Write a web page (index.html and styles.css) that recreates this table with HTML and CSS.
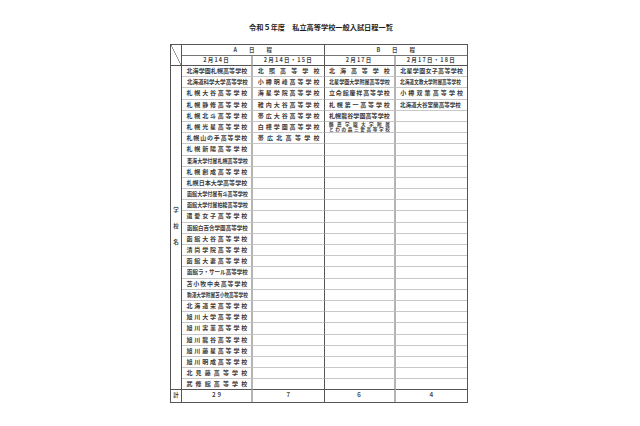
FILE: index.html
```html
<!DOCTYPE html>
<html lang="ja">
<head>
<meta charset="utf-8">
<title>令和５年度 私立高等学校一般入試日程一覧</title>
<link rel="stylesheet" href="styles.css">
</head>
<body>
<div class="page">
  <h1 class="title">令和５年度　私立高等学校一般入試日程一覧</h1>
  <div class="grid">
    <div class="c corner"></div>
    <div class="c h1 span2 dark">A日程</div>
    <div class="c h1 span2 last">B日程</div>
    <div class="c h2 g">2月14日</div>
    <div class="c h2 dark">2月14日・15日</div>
    <div class="c h2 g">2月17日</div>
    <div class="c h2 last">2月17日・18日</div>
    <div class="c label"><span>学</span><span>校</span><span>名</span></div>

    <div class="c n g">北海学園札幌高等学校</div><div class="c n dark">北照高等学校</div><div class="c n g">北海高等学校</div><div class="c n last">北星学園女子高等学校</div>
    <div class="c n g"><span class="sq x11">北海道科学大学高等学校</span></div><div class="c n dark">小樽明峰高等学校</div><div class="c n g"><span class="sq x12">北星学園大学附属高等学校</span></div><div class="c n last"><span class="sq x13">北海道文教大学附属高等学校</span></div>
    <div class="c n g">札幌大谷高等学校</div><div class="c n dark">海星学院高等学校</div><div class="c n g">立命館慶祥高等学校</div><div class="c n last">小樽双葉高等学校</div>
    <div class="c n g">札幌静修高等学校</div><div class="c n dark">稚内大谷高等学校</div><div class="c n g">札幌第一高等学校</div><div class="c n last"><span class="sq x11">北海道大谷室蘭高等学校</span></div>
    <div class="c n g">札幌北斗高等学校</div><div class="c n dark">帯広大谷高等学校</div><div class="c n g">札幌龍谷学園高等学校</div><div class="c n last"></div>
    <div class="c n g">札幌光星高等学校</div><div class="c n dark">白樺学園高等学校</div><div class="c n g two"><span class="ln">酪農学園大学附属</span><span class="ln">とわの森三愛高等学校</span></div><div class="c n last"></div>
    <div class="c n g">札幌山の手高等学校</div><div class="c n dark">帯広北高等学校</div><div class="c n g"></div><div class="c n last"></div>
    <div class="c n g">札幌新陽高等学校</div><div class="c n dark"></div><div class="c n g"></div><div class="c n last"></div>
    <div class="c n g"><span class="sq x12">東海大学付属札幌高等学校</span></div><div class="c n dark"></div><div class="c n g"></div><div class="c n last"></div>
    <div class="c n g">札幌創成高等学校</div><div class="c n dark"></div><div class="c n g"></div><div class="c n last"></div>
    <div class="c n g">札幌日本大学高等学校</div><div class="c n dark"></div><div class="c n g"></div><div class="c n last"></div>
    <div class="c n g"><span class="sq x12">函館大学付属有斗高等学校</span></div><div class="c n dark"></div><div class="c n g"></div><div class="c n last"></div>
    <div class="c n g"><span class="sq x12">函館大学付属柏稜高等学校</span></div><div class="c n dark"></div><div class="c n g"></div><div class="c n last"></div>
    <div class="c n g">遺愛女子高等学校</div><div class="c n dark"></div><div class="c n g"></div><div class="c n last"></div>
    <div class="c n g"><span class="sq x11">函館白百合学園高等学校</span></div><div class="c n dark"></div><div class="c n g"></div><div class="c n last"></div>
    <div class="c n g">函館大谷高等学校</div><div class="c n dark"></div><div class="c n g"></div><div class="c n last"></div>
    <div class="c n g">清尚学院高等学校</div><div class="c n dark"></div><div class="c n g"></div><div class="c n last"></div>
    <div class="c n g">函館大妻高等学校</div><div class="c n dark"></div><div class="c n g"></div><div class="c n last"></div>
    <div class="c n g"><span class="sq x11">函館ラ・サール高等学校</span></div><div class="c n dark"></div><div class="c n g"></div><div class="c n last"></div>
    <div class="c n g">苫小牧中央高等学校</div><div class="c n dark"></div><div class="c n g"></div><div class="c n last"></div>
    <div class="c n g"><span class="sq x13">駒澤大学附属苫小牧高等学校</span></div><div class="c n dark"></div><div class="c n g"></div><div class="c n last"></div>
    <div class="c n g">北海道栄高等学校</div><div class="c n dark"></div><div class="c n g"></div><div class="c n last"></div>
    <div class="c n g">旭川大学高等学校</div><div class="c n dark"></div><div class="c n g"></div><div class="c n last"></div>
    <div class="c n g">旭川実業高等学校</div><div class="c n dark"></div><div class="c n g"></div><div class="c n last"></div>
    <div class="c n g">旭川龍谷高等学校</div><div class="c n dark"></div><div class="c n g"></div><div class="c n last"></div>
    <div class="c n g">旭川藤星高等学校</div><div class="c n dark"></div><div class="c n g"></div><div class="c n last"></div>
    <div class="c n g">旭川明成高等学校</div><div class="c n dark"></div><div class="c n g"></div><div class="c n last"></div>
    <div class="c n g">北見藤高等学校</div><div class="c n dark"></div><div class="c n g"></div><div class="c n last"></div>
    <div class="c n g end">武修館高等学校</div><div class="c n dark end"></div><div class="c n g end"></div><div class="c n last end"></div>

    <div class="c tot kei">計</div>
    <div class="c tot g">２９</div>
    <div class="c tot dark">７</div>
    <div class="c tot g">６</div>
    <div class="c tot last">４</div>
  </div>
</div>
</body>
</html>
```

FILE: styles.css
```css
html, body {
  margin: 0;
  padding: 0;
  background: #ffffff;
}

body {
  font-family: "Noto Sans CJK JP", "Noto Sans", sans-serif;
  color: #333333;
}

.page {
  width: 640px;
  height: 426px;
}

.title {
  margin: 0;
  padding-top: 22px;
  height: 17px;
  box-sizing: border-box;
  width: 640px;
  text-align: center;
  font-size: 7.2px;
  line-height: 10px;
  font-weight: 700;
  color: #1e1e1e;
  padding-left: 2px;
}

.grid {
  margin-top: 22px;
  margin-left: 170px;
  width: 296px;
  border: 1px solid #555555;
  display: grid;
  grid-template-columns: 11px 71.25px 71.25px 71.25px 71.25px;
  grid-template-rows: 11px 10px repeat(29, 11.2px) 11.5px;
}

.c {
  box-sizing: border-box;
  border-right: 1px solid #555555;
  border-bottom: 1px solid #c8c8c8;
  min-width: 0;
  overflow: hidden;
  font-weight: 700;
}

.c.g {
  border-right: 2px solid #b4b4b4;
}

.c.dark {
  border-right: 1px solid #555555;
}

.c.last {
  border-right: 0;
}

.corner {
  grid-row: span 2;
  border-bottom: 1px solid #555555;
  background: linear-gradient(to top right, transparent calc(50% - 0.6px), #555555 50%, transparent calc(50% + 0.6px));
}

.span2 {
  grid-column: span 2;
}

.h1 {
  border-bottom: 1px solid #777777;
  text-align: center;
  font-size: 5.5px;
  line-height: 10px;
  letter-spacing: 12px;
  padding-left: 12px;
  color: #444444;
}

.h2 {
  border-bottom: 1px solid #555555;
  text-align: center;
  font-size: 5.5px;
  line-height: 9px;
  letter-spacing: 1.2px;
  color: #444444;
}

.label {
  grid-row: span 29;
  border-bottom: 1px solid #555555;
  display: flex;
  flex-direction: column;
  align-items: center;
  justify-content: center;
  gap: 10px;
  font-size: 5.5px;
  line-height: 6px;
  color: #444444;
  padding-bottom: 4px;
}

.n {
  font-size: 6px;
  line-height: 10.2px;
  padding: 0 4px 0 4.5px;
  text-align: justify;
  text-align-last: justify;
  white-space: nowrap;
  color: #3a3a3a;
}

.sq {
  display: inline-block;
  white-space: nowrap;
  transform-origin: 0 50%;
}

.x11 {
  transform: scaleX(0.92);
}

.x12 {
  transform: scaleX(0.845);
}

.x13 {
  transform: scaleX(0.78);
}

.n.two {
  white-space: normal;
  overflow: visible;
  font-size: 4.6px;
  line-height: 5px;
  padding-top: 0;
}

.ln {
  display: block;
  white-space: nowrap;
  text-align: justify;
  text-align-last: justify;
}

.end {
  border-bottom: 1px solid #555555;
}

.tot {
  border-bottom: 0;
  text-align: center;
  font-size: 5.5px;
  line-height: 10.5px;
  color: #444444;
}

.kei {
  border-right: 1px solid #555555;
}
```
